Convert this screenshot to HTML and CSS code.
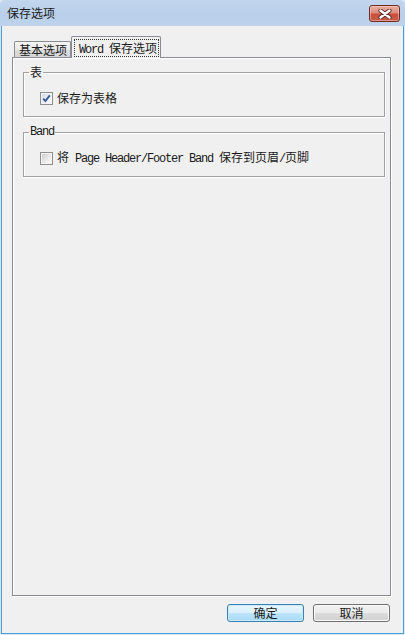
FILE: index.html
```html
<!DOCTYPE html>
<html>
<head>
<meta charset="utf-8">
<link rel="stylesheet" href="styles.css">
</head>
<body>
<div class="window">
  <div class="titlebar">
    <span class="title">保存选项</span>
    <div class="close">
      <svg width="14" height="10" viewBox="0 0 14 10">
        <path d="M2.5 1.5 L11.5 8.5 M11.5 1.5 L2.5 8.5" stroke="#5a2a24" stroke-width="4.2" stroke-linecap="round"/>
        <path d="M2.5 1.5 L11.5 8.5 M11.5 1.5 L2.5 8.5" stroke="#ffffff" stroke-width="2.4" stroke-linecap="round"/>
      </svg>
    </div>
  </div>
  <div class="client">
    <div class="tabs">
      <div class="tab">基本选项</div>
      <div class="tab active"><span class="focus"><span class="mono">Word </span>保存选项</span></div>
    </div>
    <div class="panel">
      <fieldset class="group">
        <legend class="legend">表</legend>
        <div class="row">
          <span class="check checked">
            <svg width="9" height="9" viewBox="0 0 9 9"><path d="M1.2 4.6 L3.4 7 L7.8 1.4" fill="none" stroke="#3e5a9c" stroke-width="1.9"/></svg>
          </span>
          <span class="label">保存为表格</span>
        </div>
      </fieldset>
      <fieldset class="group">
        <legend class="legend mono">Band</legend>
        <div class="row">
          <span class="check"></span>
          <span class="label">将<span class="mono"> Page Header/Footer Band </span>保存到页眉<span class="mono">/</span>页脚</span>
        </div>
      </fieldset>
    </div>
    <div class="buttons">
      <div class="btn default">确定</div>
      <div class="btn">取消</div>
    </div>
  </div>
</div>
</body>
</html>
```
FILE: styles.css
```css
* { box-sizing: border-box; }
html, body { margin: 0; padding: 0; }
body {
  width: 405px;
  height: 635px;
  font-family: "Noto Sans CJK SC", "Noto Sans", sans-serif;
  font-size: 12px;
  color: #1a1a1a;
  background: #dde8f4;
  overflow: hidden;
}
.window {
  width: 405px;
  height: 635px;
  display: flex;
  flex-direction: column;
  border-radius: 5px 5px 0 0;
  overflow: hidden;
  background: #d9e5f2;
}
.titlebar {
  height: 26px;
  flex: none;
  display: flex;
  align-items: flex-start;
  justify-content: space-between;
  padding: 5px 5px 0 7px;
  background: linear-gradient(#c2d6ee, #b9cfe9 60%, #bed3eb);
}
.title {
  line-height: 16px;
  color: #1a1a1a;
}
.close {
  width: 31px;
  height: 17px;
  border: 1px solid #6f2c24;
  border-radius: 3px;
  background: linear-gradient(#eab0a4, #dc8a7c 45%, #c8503f 55%, #c65a48);
  display: flex;
  align-items: center;
  justify-content: center;
  box-shadow: inset 0 0 0 1px rgba(255,210,200,0.5);
}
.close svg { display: block; }
.client {
  flex: 1;
  display: flex;
  flex-direction: column;
  margin: 0 1px 1px 1px;
  border: 1px solid #47a0dc;
  border-top: none;
  background: #f0f0f0;
  padding: 10px 12px 11px 10px;
}
.tabs {
  display: flex;
  align-items: flex-end;
  padding-left: 2px;
  margin-bottom: -1px;
  position: relative;
  z-index: 1;
}
.tab {
  height: 16px;
  width: 57px;
  margin-bottom: 1px;
  border: 1px solid #898c95;
  border-bottom: none;
  border-radius: 2px 2px 0 0;
  background: linear-gradient(#f4f4f4, #eaeaea 50%, #dcdcdc 52%, #d6d6d6);
  padding-left: 4px;
  line-height: 15px;
  white-space: nowrap;
}
.tab.active {
  height: 22px;
  width: 90px;
  margin-bottom: 0;
  background: #f0f0f0;
  padding: 2px 1px 0 2px;
  line-height: 16px;
}
.focus {
  display: block;
  height: 18px;
  border: 1px dotted #333;
  padding-left: 4px;
  line-height: 16px;
}
.mono {
  font-family: "Liberation Mono", "DejaVu Sans Mono", monospace;
  font-size: 12px;
  letter-spacing: -1.2px;
}
.panel {
  flex: 1;
  border: 1px solid #898c95;
  box-shadow: inset 1px 1px 0 #ffffff, 1px 1px 0 #ffffff;
  background: #f0f0f0;
  padding: 7px 5px 0 10px;
  display: flex;
  flex-direction: column;
  gap: 8px;
}
.group {
  margin: 0;
  border: 1px solid #a0a0a0;
  box-shadow: inset 1px 1px 0 #ffffff, 1px 1px 0 #ffffff;
  padding: 12px 0 11px 0;
  min-width: 0;
}
.legend {
  padding: 0 1px;
  margin-left: 5px;
  line-height: 14px;
  height: 14px;
}
.row {
  display: flex;
  align-items: center;
  height: 14px;
  gap: 4px;
  padding-left: 16px;
}
.check {
  width: 13px;
  height: 13px;
  flex: none;
  border: 1px solid #8e8f8f;
  background: linear-gradient(135deg, #c8c8c8, #ececec 60%, #fafafa);
  box-shadow: inset 0 0 0 1px #f4f4f4;
  display: flex;
  align-items: center;
  justify-content: center;
}
.check.checked {
  background: linear-gradient(135deg, #d4d8e0, #f2f4f8 70%, #fcfcfc);
}
.check svg { display: block; }
.label {
  line-height: 14px;
  white-space: nowrap;
}
.buttons {
  display: flex;
  justify-content: flex-end;
  gap: 9px;
  margin-top: 8px;
  padding-right: 1px;
}
.btn {
  width: 77px;
  height: 18px;
  border: 1px solid #707070;
  border-radius: 3px;
  background: linear-gradient(#f2f2f2, #ebebeb 50%, #dddddd 51%, #cfcfcf);
  box-shadow: inset 0 0 0 1px #fbfbfb;
  display: flex;
  align-items: center;
  justify-content: center;
  line-height: 14px;
}
.btn.default {
  border-color: #3c7fb1;
  background: linear-gradient(#eaf6fd, #d9f0fc 50%, #bee6fd 51%, #a7d9f5);
  box-shadow: inset 0 0 0 1px #c9ecfc;
}
```
